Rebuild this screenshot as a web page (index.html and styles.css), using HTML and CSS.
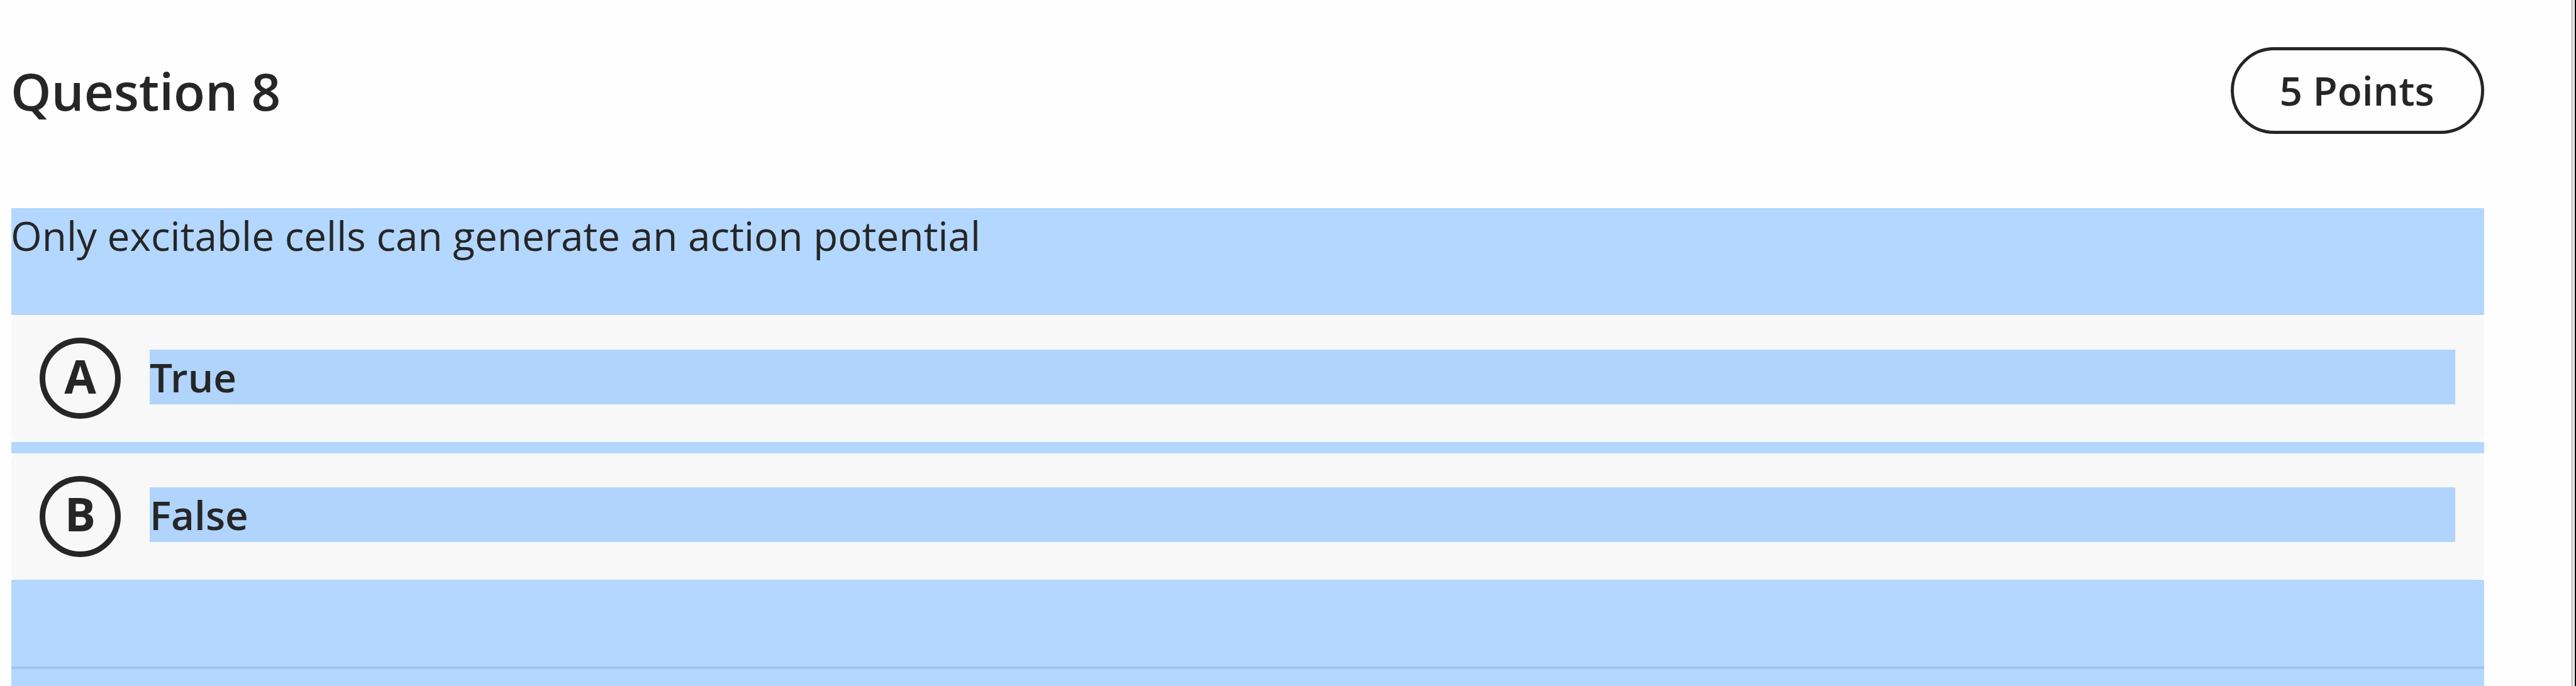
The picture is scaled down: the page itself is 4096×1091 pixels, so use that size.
FILE: index.html
```html
<!DOCTYPE html>
<html lang="en">
<head>
    <meta charset="UTF-8">
    <meta name="viewport" content="width=device-width, initial-scale=1.0">
    <title>Question 8</title>
    <link rel="stylesheet" href="styles.css">
</head>
<body>
    <main class="question">
        <header class="question-header">
            <h1 class="question-title">Question 8</h1>
            <span class="points">5 Points</span>
        </header>

        <p class="question-text">Only excitable cells can generate an action potential</p>

        <div class="answers">
            <div class="answer">
                <span class="answer-letter">A</span>
                <span class="answer-label"><span class="kern">T</span>rue</span>
            </div>
            <div class="answer-gap"></div>
            <div class="answer">
                <span class="answer-letter">B</span>
                <span class="answer-label">False</span>
            </div>
        </div>

        <div class="question-footer">
            <hr class="divider">
        </div>
    </main>
    <div class="panel-edge"></div>
</body>
</html>
```

FILE: styles.css
```css
* {
    box-sizing: border-box;
}

body {
    margin: 0;
    height: 1091px;
    display: flex;
    justify-content: space-between;
    overflow: hidden;
    background-color: #fefefe;
    color: #262626;
    font-family: "Open Sans", "Noto Sans", sans-serif;
    font-size: 63.9px;
    line-height: 87px;
}

.question {
    display: flex;
    flex-direction: column;
    width: 3932px;
    margin-left: 18px;
}

.question-header {
    display: flex;
    justify-content: space-between;
    align-items: center;
    height: 331px;
    padding: 75px 0 118px;
}

.question-title {
    margin: 0;
    font-size: 82px;
    font-weight: 600;
    line-height: 112px;
    text-indent: -1px;
}

.points {
    display: flex;
    align-items: center;
    justify-content: center;
    width: 403px;
    height: 138px;
    padding: 0 2px 2px 0;
    border: 5px solid #262626;
    border-radius: 69px;
    font-weight: 600;
}

.question-text {
    height: 170px;
    margin: 0;
    background-color: #b3d7ff;
    text-indent: -1px;
}

.answer {
    display: flex;
    align-items: center;
    gap: 46px;
    height: 201.6px;
    padding: 0 46px 0 45px;
    border-radius: 12px;
    background-color: #f8f8f8;
}

.answer-gap {
    height: 18px;
    background-color: #b3d7ff;
}

.answer-letter {
    display: flex;
    align-items: center;
    justify-content: center;
    width: 129px;
    height: 129px;
    padding-bottom: 7px;
    border: 9px solid #262626;
    border-radius: 50%;
    font-size: 73.4px;
    font-weight: 700;
}

.answer-label {
    flex: 1;
    height: 87px;
    margin-bottom: 5px;
    background-color: #b0d4fc;
    font-weight: 600;
}

.kern {
    letter-spacing: -3px;
}

.question-footer {
    flex: 1;
    padding-top: 138px;
    background-color: #b3d7ff;
}

.divider {
    height: 4px;
    margin: 0;
    border: 0;
    background-color: #a1c3eb;
}

.panel-edge {
    width: 8px;
    border-left: 4px solid #cfcfcf;
    border-right: 2px solid #000;
}
```
